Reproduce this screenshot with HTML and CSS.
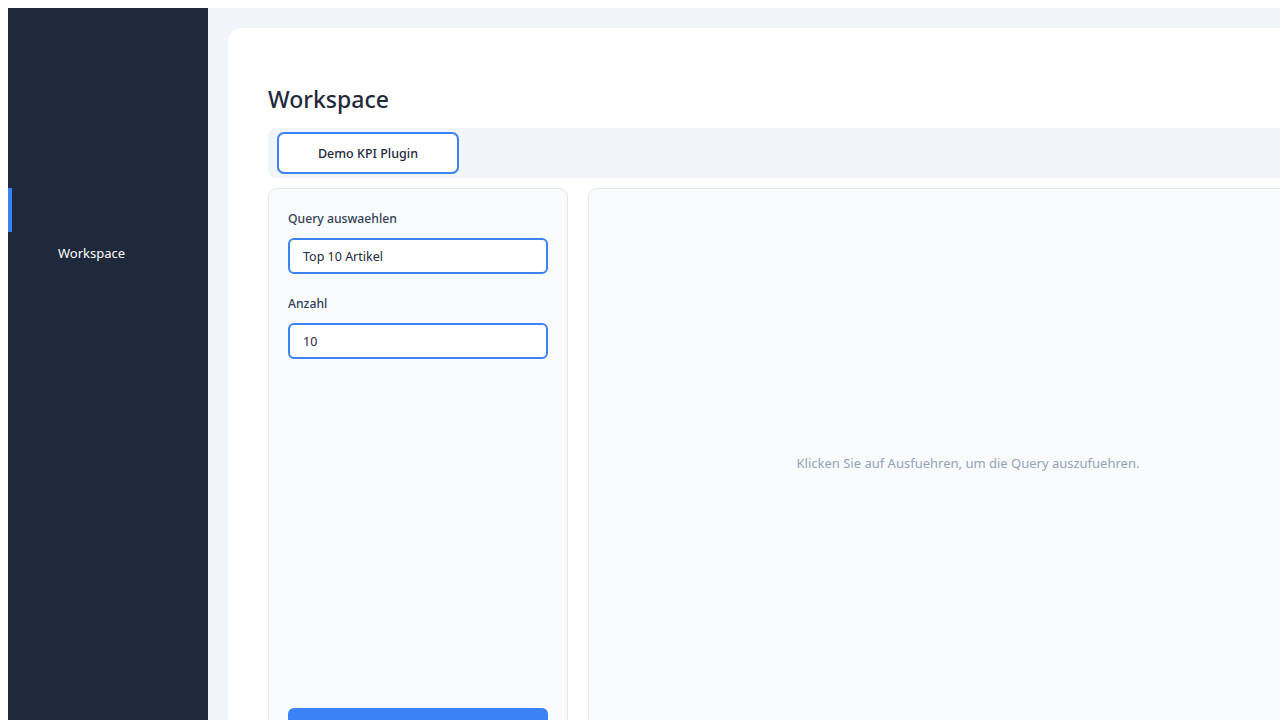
FILE: index.html
```html
<!DOCTYPE html>
<html lang="de">
<head>
    <meta charset="UTF-8">
    <meta name="viewport" content="width=device-width, initial-scale=1.0">
    <title>Workspace</title>
    <link rel="stylesheet" href="styles.css">
</head>
<body>
    <div class="app">
        <aside class="sidebar">
            <div class="navIndicator"></div>
            <div class="navItem">Workspace</div>
        </aside>

        <main class="main">
            <div class="card">
                <h1 class="title">Workspace</h1>

                <div class="tabBar">
                    <button class="tab active">Demo KPI Plugin</button>
                </div>

                <div class="panels">
                    <div class="formPanel">
                        <label class="fieldLabel" for="query">Query auswaehlen</label>
                        <input class="fieldInput" id="query" type="text" value="Top 10 Artikel">

                        <label class="fieldLabel second" for="count">Anzahl</label>
                        <input class="fieldInput" id="count" type="text" value="10">

                        <button class="runBtn" aria-label="Ausfuehren"></button>
                    </div>

                    <div class="resultPanel">
                        <p class="placeholder">Klicken Sie auf Ausfuehren, um die Query auszufuehren.</p>
                    </div>
                </div>
            </div>
        </main>
    </div>
</body>
</html>
```

FILE: styles.css
```css
html {
    overflow: hidden;
}

body {
    margin: 8px 0 8px 8px;
    font-family: "Noto Sans", "Open Sans", sans-serif;
    color: #1e293b;
    background-color: #ffffff;
    overflow: hidden;
}

.app {
    display: flex;
    width: 1400px;
    min-height: 800px;
}

.sidebar {
    flex: 0 0 200px;
    background-color: #1e293b;
    padding-top: 180px;
}

.navIndicator {
    width: 4px;
    height: 44px;
    background-color: #3b82f6;
}

.navItem {
    margin-top: 11px;
    padding-left: 50px;
    font-size: 13px;
    line-height: 20px;
    color: #ffffff;
}

.main {
    flex: 1;
    background-color: #f1f5f9;
    padding: 20px;
}

.card {
    background-color: #ffffff;
    border-radius: 14px;
    padding: 55px 40px 40px;
}

.title {
    margin: 0 0 13px;
    font-size: 23px;
    line-height: 32px;
    font-weight: 500;
    color: #1e293b;
}

.tabBar {
    display: flex;
    padding: 4px 9px;
    background-color: #f1f5f9;
    border-radius: 8px;
}

.tab {
    width: 182px;
    height: 42px;
    font-family: inherit;
    font-size: 12.5px;
    font-weight: 500;
    color: #1e293b;
    background-color: #ffffff;
    border: 2px solid #3b82f6;
    border-radius: 7px;
    cursor: pointer;
}

.panels {
    display: flex;
    gap: 20px;
    margin-top: 10px;
}

.formPanel {
    flex: 0 0 300px;
    box-sizing: border-box;
    height: 581px;
    display: flex;
    flex-direction: column;
    padding: 20px 19px;
    background-color: #f8fafc;
    border: 1px solid #e2e8f0;
    border-radius: 8px;
}

.fieldLabel {
    font-size: 12.2px;
    line-height: 20px;
    font-weight: 500;
    color: #334155;
    margin-bottom: 9px;
}

.fieldLabel.second {
    margin-top: 20px;
}

.fieldInput {
    box-sizing: border-box;
    height: 36px;
    padding: 0 13px;
    font-family: inherit;
    font-size: 12.5px;
    color: #1e293b;
    background-color: #ffffff;
    border: 2px solid #3b82f6;
    border-radius: 6px;
    outline: none;
}

.runBtn {
    margin-top: auto;
    height: 40px;
    background-color: #3b82f6;
    border: none;
    border-radius: 6px;
    cursor: pointer;
}

.resultPanel {
    flex: 1;
    display: flex;
    align-items: center;
    justify-content: center;
    padding-bottom: 31px;
    background-color: #f8fafc;
    border: 1px solid #e2e8f0;
    border-radius: 8px;
}

.placeholder {
    margin: 0;
    font-size: 13px;
    color: #94a3b8;
}
```
